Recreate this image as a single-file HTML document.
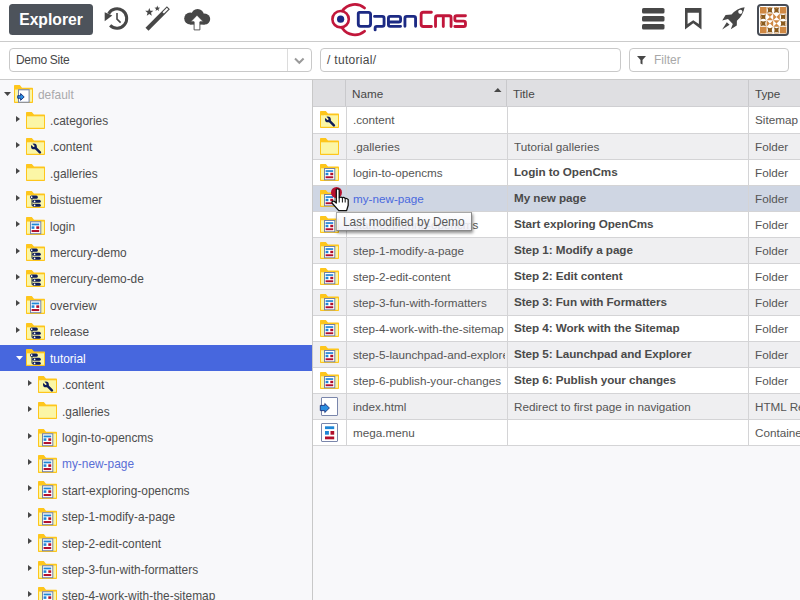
<!DOCTYPE html>
<html><head><meta charset="utf-8">
<style>
*{margin:0;padding:0;box-sizing:border-box}
html,body{width:800px;height:600px;overflow:hidden;background:#fff;font-family:"Liberation Sans", sans-serif;color:#474747}
.abs{position:absolute}
.ic{position:absolute;overflow:visible}
.hline{position:absolute;left:0;width:800px;height:1px;background:#cbcbcb}
#expl{position:absolute;left:9px;top:4px;width:84px;height:31px;background:#4d535b;border-radius:3.5px;color:#fff;font-weight:bold;font-size:15.7px;line-height:31px;text-align:center}
.field{position:absolute;top:48px;height:24px;border:1px solid #c9c9c9;border-radius:4px;background:#fff;font-size:12px;line-height:22px;padding-left:6px;color:#474747}
#tree{position:absolute;left:0;top:80px;width:312px;height:520px;background:#f8f8fa}
#vline{position:absolute;left:312px;top:80px;width:1px;height:520px;background:#c8c8c8}
#tabbg{position:absolute;left:313px;top:80px;width:487px;height:520px;background:#f8f8fa}
.selband{position:absolute;left:0;width:312px;height:26px;background:#4767de;border-top:0}
.tt{position:absolute;font-size:11.9px;line-height:26px;white-space:nowrap;color:#4d4d4d;padding-top:1.6px}
.tt.dim{color:#a9a9ab}
.tt.selt{color:#fff}
.tt.lnk{color:#5a6fd6}
.row{position:absolute;left:313px;width:487px}
.hl{position:absolute;left:313px;width:487px;height:1px;background:#d4d4d6}
.vl{position:absolute;width:1px;background:#d4d4d6}
.td{position:absolute;font-size:11.7px;line-height:25px;white-space:nowrap;overflow:hidden;color:#555;padding-top:0.2px}
.td.b{font-weight:bold;letter-spacing:-0.06px;padding-top:0px;margin-top:-0.8px;color:#4a4a4a}
.td.lnk{color:#4a69de}
.th{position:absolute;top:80px;font-size:11.7px;line-height:26px;color:#474747;padding-top:1px}
#tip{position:absolute;left:336px;top:212px;width:136px;height:19px;border:1px solid #a8a8a8;border-bottom-color:#888;border-right-color:#888;background:linear-gradient(rgba(255,255,255,0.9),rgba(238,238,246,0.88));box-shadow:1px 2px 3px rgba(0,0,0,0.45);font-size:11.9px;line-height:17px;padding-left:6px;padding-top:1px;color:#585858;white-space:nowrap}
</style></head><body>


<!-- toolbar -->
<div id="expl">Explorer</div>
<svg class="ic" style="left:100px;top:4px" width="34" height="30" viewBox="0 0 34 30">
  <path d="M8.6,9.65 A9.7,9.7 0 1 1 10.14,21.36" fill="none" stroke="#474747" stroke-width="3"/>
  <path d="M4.7,8.3 L4.7,17.2 L12.3,11.4 Z" fill="#474747"/>
  <path d="M17,9 V15.2 L20.6,18.6" fill="none" stroke="#474747" stroke-width="1.6"/>
</svg>
<svg class="ic" style="left:140px;top:2px" width="36" height="32" viewBox="0 0 36 32">
  <path d="M7,27.2 L28.4,5.7" stroke="#474747" stroke-width="4.2"/>
  <path d="M23.2,10.9 L27.6,6.5" stroke="#fff" stroke-width="2"/>
  <path d="M9.30,5.90 L10.36,8.74 L13.39,8.87 L11.01,10.76 L11.83,13.68 L9.30,12.00 L6.77,13.68 L7.59,10.76 L5.21,8.87 L8.24,8.74 Z" fill="#474747"/>
  <path d="M17.30,3.60 L18.03,5.59 L20.15,5.67 L18.49,6.99 L19.06,9.03 L17.30,7.85 L15.54,9.03 L16.11,6.99 L14.45,5.67 L16.57,5.59 Z" fill="#474747"/>
</svg>
<svg class="ic" style="left:180px;top:4px" width="34" height="30" viewBox="0 0 34 30">
  <g fill="#474747">
    <circle cx="10.2" cy="14.4" r="6"/>
    <circle cx="17.6" cy="11.3" r="6.3"/>
    <circle cx="24.7" cy="15.1" r="5.5"/>
    <rect x="10.2" y="12" width="14.5" height="8.6"/>
  </g>
  <path d="M17,11.2 L23.4,17.8 H19.9 V25.9 H14.1 V17.8 H10.6 Z" fill="#fff" stroke="#474747" stroke-width="0.9"/>
</svg>

<!-- logo -->
<svg class="ic" style="left:325px;top:0px" width="150" height="40" viewBox="0 0 150 40">
  <circle cx="15.60" cy="19.20" r="8.2" fill="none" stroke="#c1173b" stroke-width="2.6"/>
  <circle cx="15.60" cy="19.20" r="3.6" fill="#1c2a84"/>
  <path d="M17.35,10.88 A15.2,15.2 0 0 1 39.57,7.96 M17.35,28.32 A15.2,15.2 0 0 0 39.57,31.24" fill="none" stroke="#c1173b" stroke-width="2.8" stroke-linecap="round"/>
  <path d="M35.28,12.33 L43.37,12.33 Q45.57,12.33 45.57,14.53 L45.57,24.12 Q45.57,26.32 43.37,26.32 L35.48,26.32 Q33.28,26.32 33.28,24.12 L33.28,13.58 Q33.28,12.33 34.53,12.33 L35.78,12.33 M49.53,16.43 L57.27,16.43 Q59.07,16.43 59.07,18.23 L59.07,24.52 Q59.07,26.32 57.27,26.32 L51.90,26.32 Q50.13,26.32 50.13,28.10 L50.13,29.88 M75.57,26.32 L65.23,26.32 Q63.43,26.32 63.43,24.52 L63.43,18.23 Q63.43,16.43 65.23,16.43 L73.77,16.43 Q75.57,16.43 75.57,18.23 L75.57,20.15 Q75.57,21.95 73.77,21.95 L63.73,21.95 M79.93,26.32 L79.93,18.23 Q79.93,16.43 81.73,16.43 L88.77,16.43 Q90.57,16.43 90.57,18.23 L90.57,26.32" fill="none" stroke="#1c2a84" stroke-width="2.85" stroke-linecap="round"/>
  <path d="M106.38,12.23 L98.33,12.23 Q96.12,12.23 96.12,14.43 L96.12,24.27 Q96.12,26.47 98.33,26.47 L106.38,26.47 M110.53,26.47 L110.53,17.53 Q110.53,15.73 112.33,15.73 L124.27,15.73 Q126.07,15.73 126.07,17.53 L126.07,26.47 M118.30,15.73 V26.47 M140.47,15.73 L131.62,15.73 Q129.82,15.73 129.82,17.53 L129.82,19.30 Q129.82,21.10 131.62,21.10 L138.67,21.10 Q140.47,21.10 140.47,22.90 L140.47,24.67 Q140.47,26.47 138.67,26.47 L129.82,26.47" fill="none" stroke="#c1173b" stroke-width="2.85" stroke-linecap="round"/>
</svg>

<!-- right icons -->
<svg class="ic" style="left:642px;top:8px" width="23" height="22" viewBox="0 0 23 22">
  <rect x="0" y="0" width="22.5" height="5.6" rx="1.6" fill="#474747"/>
  <rect x="0" y="8" width="22.5" height="5.6" rx="1.6" fill="#474747"/>
  <rect x="0" y="16" width="22.5" height="5.6" rx="1.6" fill="#474747"/>
</svg>
<svg class="ic" style="left:685px;top:8px" width="17" height="22" viewBox="0 0 17 22">
  <path d="M0,0 H16.5 V21.5 L8.25,15.3 L0,21.5 Z M2.6,4.7 V16.1 L8.25,12.3 L13.9,16.1 V4.7 Z" fill="#474747" fill-rule="evenodd"/>
</svg>
<svg class="ic" style="left:719px;top:4px" width="30" height="30" viewBox="0 0 30 30">
  <path d="M25.6,3.2 Q18,4.2 12.5,10.4 L6.6,10.9 L3.2,16.6 L9,15 L13.8,19.9 L11.8,25.3 L17.8,21.6 L17.9,16.8 Q24.2,11 25.6,3.2 Z" fill="#474747"/>
  <circle cx="21.3" cy="7.8" r="2.1" fill="#fff"/>
  <path d="M3.2,25.5 L7.8,18.3 L10.6,20.8 Z" fill="#474747"/>
</svg>
<div class="abs" style="left:757px;top:4px;width:32px;height:32px;border:2.2px solid #474c55;border-radius:4px;background:#fff"></div>
<svg class="ic" style="left:759.8px;top:6.8px" width="26.4" height="26.4" viewBox="0 0 4 4">
  <g fill="#cf8843">
    <rect x="0" y="0" width="1" height="1"/><rect x="3" y="0" width="1" height="1"/>
    <rect x="0" y="3" width="1" height="1"/><rect x="3" y="3" width="1" height="1"/>
    <path d="M1,1 H2 L1.5,1.5 Z M1,2 H2 L1.5,1.5 Z"/>
    <path d="M2,1 V2 L2.5,1.5 Z M3,1 V2 L2.5,1.5 Z"/>
    <path d="M1,2 V3 L1.5,2.5 Z M2,2 V3 L1.5,2.5 Z"/>
    <path d="M2,2 H3 L2.5,2.5 Z M2,3 H3 L2.5,2.5 Z"/>
    <path d="M1,0 L2,0 L1.5,0.15 Z M2,0 L3,0 L2.5,0.15 Z M1,4 L2,4 L1.5,3.85 Z M2,4 L3,4 L2.5,3.85 Z M0,1 V2 L0.15,1.5 Z M0,2 V3 L0.15,2.5 Z M4,1 V2 L3.85,1.5 Z M4,2 V3 L3.85,2.5 Z"/>
  </g>
  <g fill="#8a5a1d"><path d="M1.08,0.08 Q1.50,0.33 1.92,0.08 Q1.67,0.50 1.92,0.92 Q1.50,0.67 1.08,0.92 Q1.33,0.50 1.08,0.08 Z M2.08,0.08 Q2.50,0.33 2.92,0.08 Q2.67,0.50 2.92,0.92 Q2.50,0.67 2.08,0.92 Q2.33,0.50 2.08,0.08 Z M1.08,3.08 Q1.50,3.33 1.92,3.08 Q1.67,3.50 1.92,3.92 Q1.50,3.67 1.08,3.92 Q1.33,3.50 1.08,3.08 Z M2.08,3.08 Q2.50,3.33 2.92,3.08 Q2.67,3.50 2.92,3.92 Q2.50,3.67 2.08,3.92 Q2.33,3.50 2.08,3.08 Z M0.08,1.08 Q0.50,1.33 0.92,1.08 Q0.67,1.50 0.92,1.92 Q0.50,1.67 0.08,1.92 Q0.33,1.50 0.08,1.08 Z M0.08,2.08 Q0.50,2.33 0.92,2.08 Q0.67,2.50 0.92,2.92 Q0.50,2.67 0.08,2.92 Q0.33,2.50 0.08,2.08 Z M3.08,1.08 Q3.50,1.33 3.92,1.08 Q3.67,1.50 3.92,1.92 Q3.50,1.67 3.08,1.92 Q3.33,1.50 3.08,1.08 Z M3.08,2.08 Q3.50,2.33 3.92,2.08 Q3.67,2.50 3.92,2.92 Q3.50,2.67 3.08,2.92 Q3.33,2.50 3.08,2.08 Z"/></g>
</svg>
<div class="hline" style="top:41px"></div>

<!-- fields -->
<div class="field" style="left:9px;width:303px;letter-spacing:-0.3px">Demo Site</div>
<div class="abs" style="left:287px;top:49px;width:1px;height:22px;background:#dcdcdc"></div>
<svg class="ic" style="left:294px;top:57px" width="11" height="8" viewBox="0 0 11 8"><path d="M1,1.5 L5.3,5.8 L9.6,1.5" fill="none" stroke="#9a9a9a" stroke-width="2"/></svg>
<div class="field" style="left:320px;width:301px;letter-spacing:0.3px">/ tutorial/</div>
<div class="field" style="left:629px;width:160px;padding-left:24px;color:#a8a8a8">Filter</div>
<svg class="ic" style="left:637px;top:56px" width="10" height="9" viewBox="0 0 10 9"><path d="M0,0 H9 L5.5,4 V8.5 L3.5,7.5 V4 Z" fill="#474747"/></svg>
<div class="hline" style="top:79px"></div>

<!-- tree -->
<div id="tree"></div>
<svg class="ic" style="left:3.5px;top:92.20px" width="8" height="5" viewBox="0 0 8 5"><path d="M0,0 H7 L3.5,4 Z" fill="#474747"/></svg><svg class="ic" style="left:14px;top:85px" width="19" height="18" viewBox="0 0 19 17" preserveAspectRatio="none"><path d="M0,0.8 Q0,0 0.8,0 H5.8 L8,2.5 H18.3 Q19,2.5 19,3.2 V16.3 Q19,17 18.3,17 H0.7 Q0,17 0,16.3 Z" fill="#fec61c"/>
  <rect x="1" y="4.3" width="17" height="11.5" fill="#fbf6a6"/><rect x="4.5" y="4.5" width="10.6" height="11.8" fill="#fff" stroke="#7583a8" stroke-width="1"/>
  <path d="M3.7,10.1 H6.6 V8.1 L10.2,11.3 L6.6,14.5 V12.5 H3.7 Z" fill="#2d90e2" stroke="#15307c" stroke-width="0.9" stroke-linejoin="round"/></svg><div class="tt dim" style="left:38px;top:80.00px">default</div><svg class="ic" style="left:16.0px;top:116.30px" width="5" height="7" viewBox="0 0 5 7"><path d="M0,0 V6 L4,3 Z" fill="#474747"/></svg><svg class="ic" style="left:26px;top:112px" width="19" height="17" viewBox="0 0 19 17" preserveAspectRatio="none"><path d="M0,0.8 Q0,0 0.8,0 H5.8 L8,2.5 H18.3 Q19,2.5 19,3.2 V16.3 Q19,17 18.3,17 H0.7 Q0,17 0,16.3 Z" fill="#fec61c"/>
  <rect x="1" y="4.3" width="17" height="11.5" fill="#fbf6a6"/></svg><div class="tt" style="left:50px;top:106.41px">.categories</div><svg class="ic" style="left:16.0px;top:142.30px" width="5" height="7" viewBox="0 0 5 7"><path d="M0,0 V6 L4,3 Z" fill="#474747"/></svg><svg class="ic" style="left:26px;top:138px" width="19" height="17" viewBox="0 0 19 17" preserveAspectRatio="none"><path d="M0,0.8 Q0,0 0.8,0 H5.8 L8,2.5 H18.3 Q19,2.5 19,3.2 V16.3 Q19,17 18.3,17 H0.7 Q0,17 0,16.3 Z" fill="#fec61c"/>
  <rect x="1" y="4.3" width="17" height="11.5" fill="#fbf6a6"/><path d="M9.2,9.7 L13.9,14.4" stroke="#0f1d5a" stroke-width="2.5" stroke-linecap="round"/>
  <circle cx="7.9" cy="8.4" r="2.9" fill="#0f1d5a"/>
  <path d="M7.7,8.2 L4.6,5.1" stroke="#fbf6a6" stroke-width="1.7" stroke-linecap="round"/></svg><div class="tt" style="left:50px;top:132.82px">.content</div><svg class="ic" style="left:16.0px;top:168.30px" width="5" height="7" viewBox="0 0 5 7"><path d="M0,0 V6 L4,3 Z" fill="#474747"/></svg><svg class="ic" style="left:26px;top:164px" width="19" height="17" viewBox="0 0 19 17" preserveAspectRatio="none"><path d="M0,0.8 Q0,0 0.8,0 H5.8 L8,2.5 H18.3 Q19,2.5 19,3.2 V16.3 Q19,17 18.3,17 H0.7 Q0,17 0,16.3 Z" fill="#fec61c"/>
  <rect x="1" y="4.3" width="17" height="11.5" fill="#fbf6a6"/></svg><div class="tt" style="left:50px;top:159.23px">.galleries</div><svg class="ic" style="left:16.0px;top:195.30px" width="5" height="7" viewBox="0 0 5 7"><path d="M0,0 V6 L4,3 Z" fill="#474747"/></svg><svg class="ic" style="left:26px;top:191px" width="19" height="17" viewBox="0 0 19 17" preserveAspectRatio="none"><path d="M0,0.8 Q0,0 0.8,0 H5.8 L8,2.5 H18.3 Q19,2.5 19,3.2 V16.3 Q19,17 18.3,17 H0.7 Q0,17 0,16.3 Z" fill="#fec61c"/>
  <rect x="1" y="4.3" width="17" height="11.5" fill="#fbf6a6"/><rect x="5" y="7" width="2" height="7.5" fill="#8f9476"/>
  <rect x="4" y="4.5" width="7.8" height="3.2" rx="1.5" fill="#0f1d5a"/>
  <rect x="6.3" y="8.7" width="8.5" height="3.1" rx="1.5" fill="#0f1d5a"/>
  <rect x="6.3" y="12.7" width="8.5" height="3.1" rx="1.5" fill="#0f1d5a"/>
  <circle cx="5.6" cy="6.2" r="0.85" fill="#fff"/>
  <circle cx="8.6" cy="10.3" r="0.85" fill="#fff"/>
  <circle cx="8.6" cy="14.3" r="0.85" fill="#fff"/></svg><div class="tt" style="left:50px;top:185.64px">bistuemer</div><svg class="ic" style="left:16.0px;top:221.30px" width="5" height="7" viewBox="0 0 5 7"><path d="M0,0 V6 L4,3 Z" fill="#474747"/></svg><svg class="ic" style="left:26px;top:217px" width="19" height="18" viewBox="0 0 19 17" preserveAspectRatio="none"><path d="M0,0.8 Q0,0 0.8,0 H5.8 L8,2.5 H18.3 Q19,2.5 19,3.2 V16.3 Q19,17 18.3,17 H0.7 Q0,17 0,16.3 Z" fill="#fec61c"/>
  <rect x="1" y="4.3" width="17" height="11.5" fill="#fbf6a6"/><rect x="4.5" y="4.5" width="10.3" height="11.3" fill="#fff" stroke="#7583a8" stroke-width="1"/>
  <rect x="5.6" y="6.2" width="7.6" height="1.7" fill="#1e86d6"/>
  <rect x="5.6" y="8.8" width="2.8" height="2.4" fill="#1e86d6"/>
  <rect x="10.3" y="8.8" width="2.9" height="2.4" fill="#b10f2c"/>
  <rect x="5.6" y="12.3" width="7.6" height="1.9" fill="#b10f2c"/></svg><div class="tt" style="left:50px;top:212.05px">login</div><svg class="ic" style="left:16.0px;top:248.30px" width="5" height="7" viewBox="0 0 5 7"><path d="M0,0 V6 L4,3 Z" fill="#474747"/></svg><svg class="ic" style="left:26px;top:244px" width="19" height="17" viewBox="0 0 19 17" preserveAspectRatio="none"><path d="M0,0.8 Q0,0 0.8,0 H5.8 L8,2.5 H18.3 Q19,2.5 19,3.2 V16.3 Q19,17 18.3,17 H0.7 Q0,17 0,16.3 Z" fill="#fec61c"/>
  <rect x="1" y="4.3" width="17" height="11.5" fill="#fbf6a6"/><rect x="5" y="7" width="2" height="7.5" fill="#8f9476"/>
  <rect x="4" y="4.5" width="7.8" height="3.2" rx="1.5" fill="#0f1d5a"/>
  <rect x="6.3" y="8.7" width="8.5" height="3.1" rx="1.5" fill="#0f1d5a"/>
  <rect x="6.3" y="12.7" width="8.5" height="3.1" rx="1.5" fill="#0f1d5a"/>
  <circle cx="5.6" cy="6.2" r="0.85" fill="#fff"/>
  <circle cx="8.6" cy="10.3" r="0.85" fill="#fff"/>
  <circle cx="8.6" cy="14.3" r="0.85" fill="#fff"/></svg><div class="tt" style="left:50px;top:238.46px">mercury-demo</div><svg class="ic" style="left:16.0px;top:274.30px" width="5" height="7" viewBox="0 0 5 7"><path d="M0,0 V6 L4,3 Z" fill="#474747"/></svg><svg class="ic" style="left:26px;top:270px" width="19" height="17" viewBox="0 0 19 17" preserveAspectRatio="none"><path d="M0,0.8 Q0,0 0.8,0 H5.8 L8,2.5 H18.3 Q19,2.5 19,3.2 V16.3 Q19,17 18.3,17 H0.7 Q0,17 0,16.3 Z" fill="#fec61c"/>
  <rect x="1" y="4.3" width="17" height="11.5" fill="#fbf6a6"/><rect x="5" y="7" width="2" height="7.5" fill="#8f9476"/>
  <rect x="4" y="4.5" width="7.8" height="3.2" rx="1.5" fill="#0f1d5a"/>
  <rect x="6.3" y="8.7" width="8.5" height="3.1" rx="1.5" fill="#0f1d5a"/>
  <rect x="6.3" y="12.7" width="8.5" height="3.1" rx="1.5" fill="#0f1d5a"/>
  <circle cx="5.6" cy="6.2" r="0.85" fill="#fff"/>
  <circle cx="8.6" cy="10.3" r="0.85" fill="#fff"/>
  <circle cx="8.6" cy="14.3" r="0.85" fill="#fff"/></svg><div class="tt" style="left:50px;top:264.87px">mercury-demo-de</div><svg class="ic" style="left:16.0px;top:300.30px" width="5" height="7" viewBox="0 0 5 7"><path d="M0,0 V6 L4,3 Z" fill="#474747"/></svg><svg class="ic" style="left:26px;top:296px" width="19" height="18" viewBox="0 0 19 17" preserveAspectRatio="none"><path d="M0,0.8 Q0,0 0.8,0 H5.8 L8,2.5 H18.3 Q19,2.5 19,3.2 V16.3 Q19,17 18.3,17 H0.7 Q0,17 0,16.3 Z" fill="#fec61c"/>
  <rect x="1" y="4.3" width="17" height="11.5" fill="#fbf6a6"/><rect x="4.5" y="4.5" width="10.3" height="11.3" fill="#fff" stroke="#7583a8" stroke-width="1"/>
  <rect x="5.6" y="6.2" width="7.6" height="1.7" fill="#1e86d6"/>
  <rect x="5.6" y="8.8" width="2.8" height="2.4" fill="#1e86d6"/>
  <rect x="10.3" y="8.8" width="2.9" height="2.4" fill="#b10f2c"/>
  <rect x="5.6" y="12.3" width="7.6" height="1.9" fill="#b10f2c"/></svg><div class="tt" style="left:50px;top:291.28px">overview</div><svg class="ic" style="left:16.0px;top:327.30px" width="5" height="7" viewBox="0 0 5 7"><path d="M0,0 V6 L4,3 Z" fill="#474747"/></svg><svg class="ic" style="left:26px;top:323px" width="19" height="17" viewBox="0 0 19 17" preserveAspectRatio="none"><path d="M0,0.8 Q0,0 0.8,0 H5.8 L8,2.5 H18.3 Q19,2.5 19,3.2 V16.3 Q19,17 18.3,17 H0.7 Q0,17 0,16.3 Z" fill="#fec61c"/>
  <rect x="1" y="4.3" width="17" height="11.5" fill="#fbf6a6"/><rect x="5" y="7" width="2" height="7.5" fill="#8f9476"/>
  <rect x="4" y="4.5" width="7.8" height="3.2" rx="1.5" fill="#0f1d5a"/>
  <rect x="6.3" y="8.7" width="8.5" height="3.1" rx="1.5" fill="#0f1d5a"/>
  <rect x="6.3" y="12.7" width="8.5" height="3.1" rx="1.5" fill="#0f1d5a"/>
  <circle cx="5.6" cy="6.2" r="0.85" fill="#fff"/>
  <circle cx="8.6" cy="10.3" r="0.85" fill="#fff"/>
  <circle cx="8.6" cy="14.3" r="0.85" fill="#fff"/></svg><div class="tt" style="left:50px;top:317.69px">release</div><div class="selband" style="top:344.70px"></div><svg class="ic" style="left:15.5px;top:356.20px" width="8" height="5" viewBox="0 0 8 5"><path d="M0,0 H7 L3.5,4 Z" fill="#fff"/></svg><svg class="ic" style="left:26px;top:349px" width="19" height="17" viewBox="0 0 19 17" preserveAspectRatio="none"><path d="M0,0.8 Q0,0 0.8,0 H5.8 L8,2.5 H18.3 Q19,2.5 19,3.2 V16.3 Q19,17 18.3,17 H0.7 Q0,17 0,16.3 Z" fill="#fec61c"/>
  <rect x="1" y="4.3" width="17" height="11.5" fill="#fbf6a6"/><rect x="5" y="7" width="2" height="7.5" fill="#8f9476"/>
  <rect x="4" y="4.5" width="7.8" height="3.2" rx="1.5" fill="#0f1d5a"/>
  <rect x="6.3" y="8.7" width="8.5" height="3.1" rx="1.5" fill="#0f1d5a"/>
  <rect x="6.3" y="12.7" width="8.5" height="3.1" rx="1.5" fill="#0f1d5a"/>
  <circle cx="5.6" cy="6.2" r="0.85" fill="#fff"/>
  <circle cx="8.6" cy="10.3" r="0.85" fill="#fff"/>
  <circle cx="8.6" cy="14.3" r="0.85" fill="#fff"/></svg><div class="tt selt" style="left:50px;top:344.10px">tutorial</div><svg class="ic" style="left:28.0px;top:380.30px" width="5" height="7" viewBox="0 0 5 7"><path d="M0,0 V6 L4,3 Z" fill="#474747"/></svg><svg class="ic" style="left:38px;top:376px" width="19" height="17" viewBox="0 0 19 17" preserveAspectRatio="none"><path d="M0,0.8 Q0,0 0.8,0 H5.8 L8,2.5 H18.3 Q19,2.5 19,3.2 V16.3 Q19,17 18.3,17 H0.7 Q0,17 0,16.3 Z" fill="#fec61c"/>
  <rect x="1" y="4.3" width="17" height="11.5" fill="#fbf6a6"/><path d="M9.2,9.7 L13.9,14.4" stroke="#0f1d5a" stroke-width="2.5" stroke-linecap="round"/>
  <circle cx="7.9" cy="8.4" r="2.9" fill="#0f1d5a"/>
  <path d="M7.7,8.2 L4.6,5.1" stroke="#fbf6a6" stroke-width="1.7" stroke-linecap="round"/></svg><div class="tt" style="left:62px;top:370.51px">.content</div><svg class="ic" style="left:28.0px;top:406.30px" width="5" height="7" viewBox="0 0 5 7"><path d="M0,0 V6 L4,3 Z" fill="#474747"/></svg><svg class="ic" style="left:38px;top:402px" width="19" height="17" viewBox="0 0 19 17" preserveAspectRatio="none"><path d="M0,0.8 Q0,0 0.8,0 H5.8 L8,2.5 H18.3 Q19,2.5 19,3.2 V16.3 Q19,17 18.3,17 H0.7 Q0,17 0,16.3 Z" fill="#fec61c"/>
  <rect x="1" y="4.3" width="17" height="11.5" fill="#fbf6a6"/></svg><div class="tt" style="left:62px;top:396.92px">.galleries</div><svg class="ic" style="left:28.0px;top:433.30px" width="5" height="7" viewBox="0 0 5 7"><path d="M0,0 V6 L4,3 Z" fill="#474747"/></svg><svg class="ic" style="left:38px;top:429px" width="19" height="18" viewBox="0 0 19 17" preserveAspectRatio="none"><path d="M0,0.8 Q0,0 0.8,0 H5.8 L8,2.5 H18.3 Q19,2.5 19,3.2 V16.3 Q19,17 18.3,17 H0.7 Q0,17 0,16.3 Z" fill="#fec61c"/>
  <rect x="1" y="4.3" width="17" height="11.5" fill="#fbf6a6"/><rect x="4.5" y="4.5" width="10.3" height="11.3" fill="#fff" stroke="#7583a8" stroke-width="1"/>
  <rect x="5.6" y="6.2" width="7.6" height="1.7" fill="#1e86d6"/>
  <rect x="5.6" y="8.8" width="2.8" height="2.4" fill="#1e86d6"/>
  <rect x="10.3" y="8.8" width="2.9" height="2.4" fill="#b10f2c"/>
  <rect x="5.6" y="12.3" width="7.6" height="1.9" fill="#b10f2c"/></svg><div class="tt" style="left:62px;top:423.33px">login-to-opencms</div><svg class="ic" style="left:28.0px;top:459.30px" width="5" height="7" viewBox="0 0 5 7"><path d="M0,0 V6 L4,3 Z" fill="#474747"/></svg><svg class="ic" style="left:38px;top:455px" width="19" height="18" viewBox="0 0 19 17" preserveAspectRatio="none"><path d="M0,0.8 Q0,0 0.8,0 H5.8 L8,2.5 H18.3 Q19,2.5 19,3.2 V16.3 Q19,17 18.3,17 H0.7 Q0,17 0,16.3 Z" fill="#fec61c"/>
  <rect x="1" y="4.3" width="17" height="11.5" fill="#fbf6a6"/><rect x="4.5" y="4.5" width="10.3" height="11.3" fill="#fff" stroke="#7583a8" stroke-width="1"/>
  <rect x="5.6" y="6.2" width="7.6" height="1.7" fill="#1e86d6"/>
  <rect x="5.6" y="8.8" width="2.8" height="2.4" fill="#1e86d6"/>
  <rect x="10.3" y="8.8" width="2.9" height="2.4" fill="#b10f2c"/>
  <rect x="5.6" y="12.3" width="7.6" height="1.9" fill="#b10f2c"/></svg><div class="tt lnk" style="left:62px;top:449.74px">my-new-page</div><svg class="ic" style="left:28.0px;top:485.30px" width="5" height="7" viewBox="0 0 5 7"><path d="M0,0 V6 L4,3 Z" fill="#474747"/></svg><svg class="ic" style="left:38px;top:481px" width="19" height="18" viewBox="0 0 19 17" preserveAspectRatio="none"><path d="M0,0.8 Q0,0 0.8,0 H5.8 L8,2.5 H18.3 Q19,2.5 19,3.2 V16.3 Q19,17 18.3,17 H0.7 Q0,17 0,16.3 Z" fill="#fec61c"/>
  <rect x="1" y="4.3" width="17" height="11.5" fill="#fbf6a6"/><rect x="4.5" y="4.5" width="10.3" height="11.3" fill="#fff" stroke="#7583a8" stroke-width="1"/>
  <rect x="5.6" y="6.2" width="7.6" height="1.7" fill="#1e86d6"/>
  <rect x="5.6" y="8.8" width="2.8" height="2.4" fill="#1e86d6"/>
  <rect x="10.3" y="8.8" width="2.9" height="2.4" fill="#b10f2c"/>
  <rect x="5.6" y="12.3" width="7.6" height="1.9" fill="#b10f2c"/></svg><div class="tt" style="left:62px;top:476.15px">start-exploring-opencms</div><svg class="ic" style="left:28.0px;top:512.30px" width="5" height="7" viewBox="0 0 5 7"><path d="M0,0 V6 L4,3 Z" fill="#474747"/></svg><svg class="ic" style="left:38px;top:508px" width="19" height="18" viewBox="0 0 19 17" preserveAspectRatio="none"><path d="M0,0.8 Q0,0 0.8,0 H5.8 L8,2.5 H18.3 Q19,2.5 19,3.2 V16.3 Q19,17 18.3,17 H0.7 Q0,17 0,16.3 Z" fill="#fec61c"/>
  <rect x="1" y="4.3" width="17" height="11.5" fill="#fbf6a6"/><rect x="4.5" y="4.5" width="10.3" height="11.3" fill="#fff" stroke="#7583a8" stroke-width="1"/>
  <rect x="5.6" y="6.2" width="7.6" height="1.7" fill="#1e86d6"/>
  <rect x="5.6" y="8.8" width="2.8" height="2.4" fill="#1e86d6"/>
  <rect x="10.3" y="8.8" width="2.9" height="2.4" fill="#b10f2c"/>
  <rect x="5.6" y="12.3" width="7.6" height="1.9" fill="#b10f2c"/></svg><div class="tt" style="left:62px;top:502.56px">step-1-modify-a-page</div><svg class="ic" style="left:28.0px;top:538.30px" width="5" height="7" viewBox="0 0 5 7"><path d="M0,0 V6 L4,3 Z" fill="#474747"/></svg><svg class="ic" style="left:38px;top:534px" width="19" height="18" viewBox="0 0 19 17" preserveAspectRatio="none"><path d="M0,0.8 Q0,0 0.8,0 H5.8 L8,2.5 H18.3 Q19,2.5 19,3.2 V16.3 Q19,17 18.3,17 H0.7 Q0,17 0,16.3 Z" fill="#fec61c"/>
  <rect x="1" y="4.3" width="17" height="11.5" fill="#fbf6a6"/><rect x="4.5" y="4.5" width="10.3" height="11.3" fill="#fff" stroke="#7583a8" stroke-width="1"/>
  <rect x="5.6" y="6.2" width="7.6" height="1.7" fill="#1e86d6"/>
  <rect x="5.6" y="8.8" width="2.8" height="2.4" fill="#1e86d6"/>
  <rect x="10.3" y="8.8" width="2.9" height="2.4" fill="#b10f2c"/>
  <rect x="5.6" y="12.3" width="7.6" height="1.9" fill="#b10f2c"/></svg><div class="tt" style="left:62px;top:528.97px">step-2-edit-content</div><svg class="ic" style="left:28.0px;top:565.30px" width="5" height="7" viewBox="0 0 5 7"><path d="M0,0 V6 L4,3 Z" fill="#474747"/></svg><svg class="ic" style="left:38px;top:561px" width="19" height="18" viewBox="0 0 19 17" preserveAspectRatio="none"><path d="M0,0.8 Q0,0 0.8,0 H5.8 L8,2.5 H18.3 Q19,2.5 19,3.2 V16.3 Q19,17 18.3,17 H0.7 Q0,17 0,16.3 Z" fill="#fec61c"/>
  <rect x="1" y="4.3" width="17" height="11.5" fill="#fbf6a6"/><rect x="4.5" y="4.5" width="10.3" height="11.3" fill="#fff" stroke="#7583a8" stroke-width="1"/>
  <rect x="5.6" y="6.2" width="7.6" height="1.7" fill="#1e86d6"/>
  <rect x="5.6" y="8.8" width="2.8" height="2.4" fill="#1e86d6"/>
  <rect x="10.3" y="8.8" width="2.9" height="2.4" fill="#b10f2c"/>
  <rect x="5.6" y="12.3" width="7.6" height="1.9" fill="#b10f2c"/></svg><div class="tt" style="left:62px;top:555.38px">step-3-fun-with-formatters</div><svg class="ic" style="left:28.0px;top:591.30px" width="5" height="7" viewBox="0 0 5 7"><path d="M0,0 V6 L4,3 Z" fill="#474747"/></svg><svg class="ic" style="left:38px;top:587px" width="19" height="18" viewBox="0 0 19 17" preserveAspectRatio="none"><path d="M0,0.8 Q0,0 0.8,0 H5.8 L8,2.5 H18.3 Q19,2.5 19,3.2 V16.3 Q19,17 18.3,17 H0.7 Q0,17 0,16.3 Z" fill="#fec61c"/>
  <rect x="1" y="4.3" width="17" height="11.5" fill="#fbf6a6"/><rect x="4.5" y="4.5" width="10.3" height="11.3" fill="#fff" stroke="#7583a8" stroke-width="1"/>
  <rect x="5.6" y="6.2" width="7.6" height="1.7" fill="#1e86d6"/>
  <rect x="5.6" y="8.8" width="2.8" height="2.4" fill="#1e86d6"/>
  <rect x="10.3" y="8.8" width="2.9" height="2.4" fill="#b10f2c"/>
  <rect x="5.6" y="12.3" width="7.6" height="1.9" fill="#b10f2c"/></svg><div class="tt" style="left:62px;top:581.79px">step-4-work-with-the-sitemap</div>
<div id="vline"></div>

<!-- table -->
<div id="tabbg"></div>
<div class="row" style="top:80px;height:26px;background:#dfdfe2"></div>
<div class="hl" style="top:106px;background:#cfcfd2"></div>
<div class="vl" style="left:345px;top:80px;height:26px;background:#c9c9cc"></div>
<div class="vl" style="left:506px;top:80px;height:26px;background:#c9c9cc"></div>
<div class="vl" style="left:748px;top:80px;height:26px;background:#c9c9cc"></div>
<div class="th" style="left:352px">Name</div>
<svg class="ic" style="left:494px;top:88px" width="8" height="4" viewBox="0 0 8 4"><path d="M0,4 L3.8,0 L7.5,4 Z" fill="#474747"/></svg>
<div class="th" style="left:513px">Title</div>
<div class="th" style="left:755px">Type</div>
<div class="row" style="top:107px;height:26px;background:#ffffff"></div><div class="hl" style="top:133px"></div><svg class="ic" style="left:320px;top:111px" width="19" height="17" viewBox="0 0 19 17" preserveAspectRatio="none"><path d="M0,0.8 Q0,0 0.8,0 H5.8 L8,2.5 H18.3 Q19,2.5 19,3.2 V16.3 Q19,17 18.3,17 H0.7 Q0,17 0,16.3 Z" fill="#fec61c"/>
  <rect x="1" y="4.3" width="17" height="11.5" fill="#fbf6a6"/><path d="M9.2,9.7 L13.9,14.4" stroke="#0f1d5a" stroke-width="2.5" stroke-linecap="round"/>
  <circle cx="7.9" cy="8.4" r="2.9" fill="#0f1d5a"/>
  <path d="M7.7,8.2 L4.6,5.1" stroke="#fbf6a6" stroke-width="1.7" stroke-linecap="round"/></svg><div class="td" style="left:353px;top:107px;width:152px">.content</div><div class="td" style="left:755px;top:107px;width:60px">Sitemap</div><div class="row" style="top:134px;height:25px;background:#efeff1"></div><div class="hl" style="top:159px"></div><svg class="ic" style="left:320px;top:138px" width="19" height="17" viewBox="0 0 19 17" preserveAspectRatio="none"><path d="M0,0.8 Q0,0 0.8,0 H5.8 L8,2.5 H18.3 Q19,2.5 19,3.2 V16.3 Q19,17 18.3,17 H0.7 Q0,17 0,16.3 Z" fill="#fec61c"/>
  <rect x="1" y="4.3" width="17" height="11.5" fill="#fbf6a6"/></svg><div class="td" style="left:353px;top:134px;width:152px">.galleries</div><div class="td" style="left:514px;top:134px;width:232px">Tutorial galleries</div><div class="td" style="left:755px;top:134px;width:60px">Folder</div><div class="row" style="top:160px;height:25px;background:#ffffff"></div><div class="hl" style="top:185px"></div><svg class="ic" style="left:320px;top:164px" width="19" height="17" viewBox="0 0 19 17" preserveAspectRatio="none"><path d="M0,0.8 Q0,0 0.8,0 H5.8 L8,2.5 H18.3 Q19,2.5 19,3.2 V16.3 Q19,17 18.3,17 H0.7 Q0,17 0,16.3 Z" fill="#fec61c"/>
  <rect x="1" y="4.3" width="17" height="11.5" fill="#fbf6a6"/><rect x="4.5" y="4.5" width="10.3" height="11.3" fill="#fff" stroke="#7583a8" stroke-width="1"/>
  <rect x="5.6" y="6.2" width="7.6" height="1.7" fill="#1e86d6"/>
  <rect x="5.6" y="8.8" width="2.8" height="2.4" fill="#1e86d6"/>
  <rect x="10.3" y="8.8" width="2.9" height="2.4" fill="#b10f2c"/>
  <rect x="5.6" y="12.3" width="7.6" height="1.9" fill="#b10f2c"/></svg><div class="td" style="left:353px;top:160px;width:152px">login-to-opencms</div><div class="td b" style="left:514px;top:160px;width:232px">Login to OpenCms</div><div class="td" style="left:755px;top:160px;width:60px">Folder</div><div class="row" style="top:186px;height:25px;background:#cfd6e3"></div><div class="hl" style="top:211px"></div><svg class="ic" style="left:320px;top:190px" width="19" height="17" viewBox="0 0 19 17" preserveAspectRatio="none"><path d="M0,0.8 Q0,0 0.8,0 H5.8 L8,2.5 H18.3 Q19,2.5 19,3.2 V16.3 Q19,17 18.3,17 H0.7 Q0,17 0,16.3 Z" fill="#fec61c"/>
  <rect x="1" y="4.3" width="17" height="11.5" fill="#fbf6a6"/><rect x="4.5" y="4.5" width="10.3" height="11.3" fill="#fff" stroke="#7583a8" stroke-width="1"/>
  <rect x="5.6" y="6.2" width="7.6" height="1.7" fill="#1e86d6"/>
  <rect x="5.6" y="8.8" width="2.8" height="2.4" fill="#1e86d6"/>
  <rect x="10.3" y="8.8" width="2.9" height="2.4" fill="#b10f2c"/>
  <rect x="5.6" y="12.3" width="7.6" height="1.9" fill="#b10f2c"/></svg><div class="td lnk" style="left:353px;top:186px;width:152px">my-new-page</div><div class="td b" style="left:514px;top:186px;width:232px">My new page</div><div class="td" style="left:755px;top:186px;width:60px">Folder</div><div class="row" style="top:212px;height:25px;background:#ffffff"></div><div class="hl" style="top:237px"></div><svg class="ic" style="left:320px;top:216px" width="19" height="17" viewBox="0 0 19 17" preserveAspectRatio="none"><path d="M0,0.8 Q0,0 0.8,0 H5.8 L8,2.5 H18.3 Q19,2.5 19,3.2 V16.3 Q19,17 18.3,17 H0.7 Q0,17 0,16.3 Z" fill="#fec61c"/>
  <rect x="1" y="4.3" width="17" height="11.5" fill="#fbf6a6"/><rect x="4.5" y="4.5" width="10.3" height="11.3" fill="#fff" stroke="#7583a8" stroke-width="1"/>
  <rect x="5.6" y="6.2" width="7.6" height="1.7" fill="#1e86d6"/>
  <rect x="5.6" y="8.8" width="2.8" height="2.4" fill="#1e86d6"/>
  <rect x="10.3" y="8.8" width="2.9" height="2.4" fill="#b10f2c"/>
  <rect x="5.6" y="12.3" width="7.6" height="1.9" fill="#b10f2c"/></svg><div class="td" style="left:353px;top:212px;width:152px">start-exploring-opencms</div><div class="td b" style="left:514px;top:212px;width:232px">Start exploring OpenCms</div><div class="td" style="left:755px;top:212px;width:60px">Folder</div><div class="row" style="top:238px;height:25px;background:#efeff1"></div><div class="hl" style="top:263px"></div><svg class="ic" style="left:320px;top:242px" width="19" height="17" viewBox="0 0 19 17" preserveAspectRatio="none"><path d="M0,0.8 Q0,0 0.8,0 H5.8 L8,2.5 H18.3 Q19,2.5 19,3.2 V16.3 Q19,17 18.3,17 H0.7 Q0,17 0,16.3 Z" fill="#fec61c"/>
  <rect x="1" y="4.3" width="17" height="11.5" fill="#fbf6a6"/><rect x="4.5" y="4.5" width="10.3" height="11.3" fill="#fff" stroke="#7583a8" stroke-width="1"/>
  <rect x="5.6" y="6.2" width="7.6" height="1.7" fill="#1e86d6"/>
  <rect x="5.6" y="8.8" width="2.8" height="2.4" fill="#1e86d6"/>
  <rect x="10.3" y="8.8" width="2.9" height="2.4" fill="#b10f2c"/>
  <rect x="5.6" y="12.3" width="7.6" height="1.9" fill="#b10f2c"/></svg><div class="td" style="left:353px;top:238px;width:152px">step-1-modify-a-page</div><div class="td b" style="left:514px;top:238px;width:232px">Step 1: Modify a page</div><div class="td" style="left:755px;top:238px;width:60px">Folder</div><div class="row" style="top:264px;height:25px;background:#ffffff"></div><div class="hl" style="top:289px"></div><svg class="ic" style="left:320px;top:268px" width="19" height="17" viewBox="0 0 19 17" preserveAspectRatio="none"><path d="M0,0.8 Q0,0 0.8,0 H5.8 L8,2.5 H18.3 Q19,2.5 19,3.2 V16.3 Q19,17 18.3,17 H0.7 Q0,17 0,16.3 Z" fill="#fec61c"/>
  <rect x="1" y="4.3" width="17" height="11.5" fill="#fbf6a6"/><rect x="4.5" y="4.5" width="10.3" height="11.3" fill="#fff" stroke="#7583a8" stroke-width="1"/>
  <rect x="5.6" y="6.2" width="7.6" height="1.7" fill="#1e86d6"/>
  <rect x="5.6" y="8.8" width="2.8" height="2.4" fill="#1e86d6"/>
  <rect x="10.3" y="8.8" width="2.9" height="2.4" fill="#b10f2c"/>
  <rect x="5.6" y="12.3" width="7.6" height="1.9" fill="#b10f2c"/></svg><div class="td" style="left:353px;top:264px;width:152px">step-2-edit-content</div><div class="td b" style="left:514px;top:264px;width:232px">Step 2: Edit content</div><div class="td" style="left:755px;top:264px;width:60px">Folder</div><div class="row" style="top:290px;height:25px;background:#efeff1"></div><div class="hl" style="top:315px"></div><svg class="ic" style="left:320px;top:294px" width="19" height="17" viewBox="0 0 19 17" preserveAspectRatio="none"><path d="M0,0.8 Q0,0 0.8,0 H5.8 L8,2.5 H18.3 Q19,2.5 19,3.2 V16.3 Q19,17 18.3,17 H0.7 Q0,17 0,16.3 Z" fill="#fec61c"/>
  <rect x="1" y="4.3" width="17" height="11.5" fill="#fbf6a6"/><rect x="4.5" y="4.5" width="10.3" height="11.3" fill="#fff" stroke="#7583a8" stroke-width="1"/>
  <rect x="5.6" y="6.2" width="7.6" height="1.7" fill="#1e86d6"/>
  <rect x="5.6" y="8.8" width="2.8" height="2.4" fill="#1e86d6"/>
  <rect x="10.3" y="8.8" width="2.9" height="2.4" fill="#b10f2c"/>
  <rect x="5.6" y="12.3" width="7.6" height="1.9" fill="#b10f2c"/></svg><div class="td" style="left:353px;top:290px;width:152px">step-3-fun-with-formatters</div><div class="td b" style="left:514px;top:290px;width:232px">Step 3: Fun with Formatters</div><div class="td" style="left:755px;top:290px;width:60px">Folder</div><div class="row" style="top:316px;height:25px;background:#ffffff"></div><div class="hl" style="top:341px"></div><svg class="ic" style="left:320px;top:320px" width="19" height="17" viewBox="0 0 19 17" preserveAspectRatio="none"><path d="M0,0.8 Q0,0 0.8,0 H5.8 L8,2.5 H18.3 Q19,2.5 19,3.2 V16.3 Q19,17 18.3,17 H0.7 Q0,17 0,16.3 Z" fill="#fec61c"/>
  <rect x="1" y="4.3" width="17" height="11.5" fill="#fbf6a6"/><rect x="4.5" y="4.5" width="10.3" height="11.3" fill="#fff" stroke="#7583a8" stroke-width="1"/>
  <rect x="5.6" y="6.2" width="7.6" height="1.7" fill="#1e86d6"/>
  <rect x="5.6" y="8.8" width="2.8" height="2.4" fill="#1e86d6"/>
  <rect x="10.3" y="8.8" width="2.9" height="2.4" fill="#b10f2c"/>
  <rect x="5.6" y="12.3" width="7.6" height="1.9" fill="#b10f2c"/></svg><div class="td" style="left:353px;top:316px;width:152px">step-4-work-with-the-sitemap</div><div class="td b" style="left:514px;top:316px;width:232px">Step 4: Work with the Sitemap</div><div class="td" style="left:755px;top:316px;width:60px">Folder</div><div class="row" style="top:342px;height:25px;background:#efeff1"></div><div class="hl" style="top:367px"></div><svg class="ic" style="left:320px;top:346px" width="19" height="17" viewBox="0 0 19 17" preserveAspectRatio="none"><path d="M0,0.8 Q0,0 0.8,0 H5.8 L8,2.5 H18.3 Q19,2.5 19,3.2 V16.3 Q19,17 18.3,17 H0.7 Q0,17 0,16.3 Z" fill="#fec61c"/>
  <rect x="1" y="4.3" width="17" height="11.5" fill="#fbf6a6"/><rect x="4.5" y="4.5" width="10.3" height="11.3" fill="#fff" stroke="#7583a8" stroke-width="1"/>
  <rect x="5.6" y="6.2" width="7.6" height="1.7" fill="#1e86d6"/>
  <rect x="5.6" y="8.8" width="2.8" height="2.4" fill="#1e86d6"/>
  <rect x="10.3" y="8.8" width="2.9" height="2.4" fill="#b10f2c"/>
  <rect x="5.6" y="12.3" width="7.6" height="1.9" fill="#b10f2c"/></svg><div class="td" style="left:353px;top:342px;width:152px">step-5-launchpad-and-explorer</div><div class="td b" style="left:514px;top:342px;width:232px">Step 5: Launchpad and Explorer</div><div class="td" style="left:755px;top:342px;width:60px">Folder</div><div class="row" style="top:368px;height:25px;background:#ffffff"></div><div class="hl" style="top:393px"></div><svg class="ic" style="left:320px;top:372px" width="19" height="17" viewBox="0 0 19 17" preserveAspectRatio="none"><path d="M0,0.8 Q0,0 0.8,0 H5.8 L8,2.5 H18.3 Q19,2.5 19,3.2 V16.3 Q19,17 18.3,17 H0.7 Q0,17 0,16.3 Z" fill="#fec61c"/>
  <rect x="1" y="4.3" width="17" height="11.5" fill="#fbf6a6"/><rect x="4.5" y="4.5" width="10.3" height="11.3" fill="#fff" stroke="#7583a8" stroke-width="1"/>
  <rect x="5.6" y="6.2" width="7.6" height="1.7" fill="#1e86d6"/>
  <rect x="5.6" y="8.8" width="2.8" height="2.4" fill="#1e86d6"/>
  <rect x="10.3" y="8.8" width="2.9" height="2.4" fill="#b10f2c"/>
  <rect x="5.6" y="12.3" width="7.6" height="1.9" fill="#b10f2c"/></svg><div class="td" style="left:353px;top:368px;width:152px">step-6-publish-your-changes</div><div class="td b" style="left:514px;top:368px;width:232px">Step 6: Publish your changes</div><div class="td" style="left:755px;top:368px;width:60px">Folder</div><div class="row" style="top:394px;height:25px;background:#efeff1"></div><div class="hl" style="top:419px"></div><svg class="ic" style="left:320.2px;top:397px" width="17" height="19" viewBox="0 0 17 19"><rect x="1.5" y="0.5" width="16" height="18" rx="0.5" fill="#fff" stroke="#7a86ab" stroke-width="1"/>
  <path d="M0.3,8.4 H4.8 V6.5 L9.4,11 L4.8,15.5 V13.6 H0.3 Z" fill="#2a8ee0" stroke="#17307a" stroke-width="0.9" stroke-linejoin="round"/></svg><div class="td" style="left:353px;top:394px;width:152px">index.html</div><div class="td" style="left:514px;top:394px;width:232px">Redirect to first page in navigation</div><div class="td" style="left:755px;top:394px;width:60px">HTML Redirect</div><div class="row" style="top:420px;height:25px;background:#ffffff"></div><div class="hl" style="top:445px"></div><svg class="ic" style="left:321px;top:423px" width="17" height="19" viewBox="0 0 17 19"><rect x="0.5" y="0.5" width="16" height="18" rx="0.5" fill="#fff" stroke="#7a86ab" stroke-width="1"/>
  <rect x="4" y="3.3" width="9.2" height="2.8" fill="#1e86d6"/>
  <rect x="4" y="8" width="3.9" height="3.7" fill="#1e86d6"/>
  <rect x="9.5" y="8" width="3.7" height="3.7" fill="#b10f2c"/>
  <rect x="4" y="13.5" width="9.2" height="2.8" fill="#b10f2c"/></svg><div class="td" style="left:353px;top:420px;width:152px">mega.menu</div><div class="td" style="left:755px;top:420px;width:60px">Container page</div>
<div class="vl" style="left:346px;top:107px;height:338px"></div>
<div class="vl" style="left:507px;top:107px;height:338px"></div>
<div class="vl" style="left:748px;top:107px;height:338px"></div>

<!-- hover marker + cursor + tooltip -->
<div class="abs" style="left:331px;top:187px;width:11px;height:11px;border-radius:50%;background:#b8102f"></div>
<svg class="ic" style="left:330px;top:188px" width="22" height="25" viewBox="0 0 22 25">
  <path d="M6.3,1.3 Q8,0.4 9.2,1.6 V9.8 Q10.8,8.6 12.4,9.6 Q13.9,9 15.2,10.4 Q17,9.9 18.2,11.6 V17.3 L16.6,22.6 H8.8 L2.2,15.2 Q1.4,13.7 3,13.1 Q4.4,12.8 6.3,15 V1.3 Z" fill="#fff" stroke="#111" stroke-width="1.3" stroke-linejoin="round"/>
  <path d="M9.2,9.8 V14.5 M12.4,9.6 V14.5 M15.2,10.4 V14.5" stroke="#111" stroke-width="1"/>
</svg>
<div id="tip">Last modified by Demo</div>
</body></html>
